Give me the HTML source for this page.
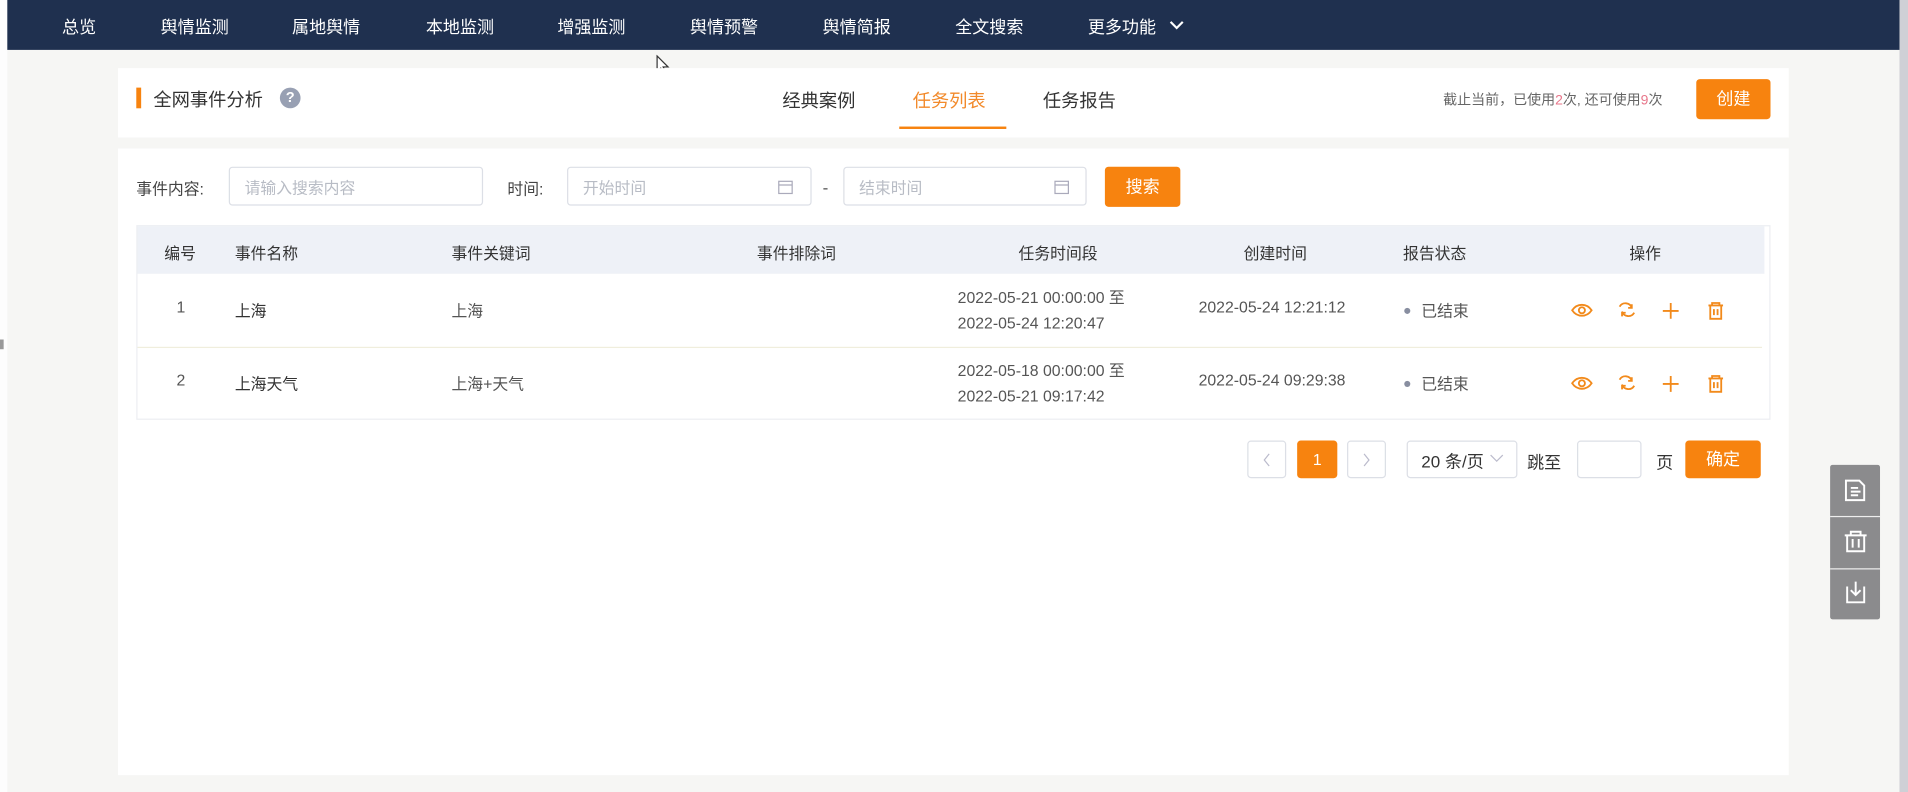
<!DOCTYPE html>
<html><head><meta charset="utf-8"><style>
html,body{margin:0;padding:0;width:1908px;height:792px;overflow:hidden;background:#f6f6f4;}
#w{position:absolute;left:0;top:0;width:1568px;height:651px;transform:scale(1.21684);transform-origin:0 0;font-family:"Liberation Sans","Noto Sans CJK SC",sans-serif;color:#333;font-size:14px;}
.a{position:absolute;white-space:nowrap;}
.nav{left:6px;top:0;width:1555px;height:41px;background:#1f304f;}
.nav span{position:absolute;top:12px;color:#fff;font-size:14px;}
.card{background:#fff;}
.inp{border:1px solid #dcdfe6;border-radius:3px;background:#fff;height:32px;box-sizing:border-box;color:#b8bcc5;font-size:13px;line-height:33px;padding-left:12px;}
.btn{background:#f7830f;color:#fff;border-radius:3px;text-align:center;}
.th{top:198px;font-size:13px;color:#333;}
.td{font-size:13px;color:#555;}
.ic{position:absolute;}
</style></head><body><div id="w">
<div class="a" style="left:0;top:0;width:6px;height:651px;background:#fdfdfd"></div>
<div class="a" style="left:1561px;top:0;width:7px;height:651px;background:#cfd0d6"></div>
<div class="a nav">
<span style="left:45px">总览</span><span style="left:126px">舆情监测</span><span style="left:234px">属地舆情</span><span style="left:344px">本地监测</span><span style="left:452px">增强监测</span><span style="left:561px">舆情预警</span><span style="left:670px">舆情简报</span><span style="left:779px">全文搜索</span><span style="left:888px">更多功能</span>
<svg class="ic" style="left:955px;top:16px" width="12" height="10"><path d="M1 2l5 5 5-5" stroke="#fff" stroke-width="1.8" fill="none"/></svg>
</div>
<svg class="ic" style="left:539px;top:45px" width="12" height="18"><path d="M1 1v13l3-3 3 6 2-1-3-6h4z" fill="#fff" stroke="#333" stroke-width="1"/></svg>

<div class="a card" style="left:97px;top:56px;width:1373px;height:57px"></div>
<div class="a" style="left:112px;top:72px;width:4px;height:17px;background:#f7830f"></div>
<div class="a" style="left:126px;top:71px;font-size:15px;color:#333">全网事件分析</div>
<div class="a" style="left:230px;top:72px;width:17px;height:17px;border-radius:50%;background:#98a0b3;color:#fff;font-size:12px;font-weight:bold;text-align:center;line-height:17px">?</div>
<div class="a" style="left:643px;top:72px;font-size:15px;color:#333">经典案例</div>
<div class="a" style="left:750px;top:72px;font-size:15px;color:#f28a2b">任务列表</div>
<div class="a" style="left:739px;top:104px;width:88px;height:2px;background:#f7830f"></div>
<div class="a" style="left:857px;top:72px;font-size:15px;color:#333">任务报告</div>
<div class="a" style="left:1186px;top:74px;font-size:11.5px;color:#666">截止当前，已使用<span style="color:#e8768a">2</span>次, 还可使用<span style="color:#e8768a">9</span>次</div>
<div class="a btn" style="left:1394px;top:65px;width:61px;height:33px;line-height:33px;font-size:14px">创建</div>

<div class="a card" style="left:97px;top:122px;width:1373px;height:515px"></div>
<div class="a" style="left:112px;top:145px;font-size:13px;color:#444">事件内容:</div>
<div class="a inp" style="left:188px;top:137px;width:209px">请输入搜索内容</div>
<div class="a" style="left:417px;top:145px;font-size:13px;color:#444">时间:</div>
<div class="a inp" style="left:466px;top:137px;width:201px">开始时间</div>
<svg class="ic" style="left:639px;top:147px" width="13" height="13"><rect x="1" y="2" width="11" height="10" fill="none" stroke="#aab" stroke-width="1"/><path d="M1 5h11" stroke="#aab"/></svg>
<div class="a" style="left:676px;top:146px;color:#555">-</div>
<div class="a inp" style="left:693px;top:137px;width:200px">结束时间</div>
<svg class="ic" style="left:866px;top:147px" width="13" height="13"><rect x="1" y="2" width="11" height="10" fill="none" stroke="#aab" stroke-width="1"/><path d="M1 5h11" stroke="#aab"/></svg>
<div class="a btn" style="left:908px;top:137px;width:62px;height:33px;line-height:33px;font-size:14px">搜索</div>

<div class="a" style="left:112px;top:185px;width:1343px;height:160px;border:1px solid #eceef2;box-sizing:border-box"></div>
<div class="a" style="left:113px;top:186px;width:1337px;height:39px;background:#eef1f7"></div>
<div class="a th" style="left:135px">编号</div>
<div class="a th" style="left:193px">事件名称</div>
<div class="a th" style="left:371px">事件关键词</div>
<div class="a th" style="left:622px">事件排除词</div>
<div class="a th" style="left:837px">任务时间段</div>
<div class="a th" style="left:1022px">创建时间</div>
<div class="a th" style="left:1153px">报告状态</div>
<div class="a th" style="left:1339px">操作</div>
<div class="a" style="left:113px;top:285px;width:1335px;height:1px;background:#f0eedd"></div>

<div class="a td" style="left:145px;top:245px">1</div>
<div class="a td" style="left:193px;top:245px;color:#333">上海</div>
<div class="a td" style="left:371px;top:245px">上海</div>
<div class="a td" style="left:787px;top:234px;line-height:21px">2022-05-21 00:00:00 至<br>2022-05-24 12:20:47</div>
<div class="a td" style="left:985px;top:245px">2022-05-24 12:21:12</div>
<div class="a" style="left:1154px;top:253px;width:5px;height:5px;border-radius:50%;background:#888ea0"></div>
<div class="a td" style="left:1168px;top:245px">已结束</div>

<div class="a td" style="left:145px;top:305px">2</div>
<div class="a td" style="left:193px;top:305px;color:#333">上海天气</div>
<div class="a td" style="left:371px;top:305px">上海+天气</div>
<div class="a td" style="left:787px;top:294px;line-height:21px">2022-05-18 00:00:00 至<br>2022-05-21 09:17:42</div>
<div class="a td" style="left:985px;top:305px">2022-05-24 09:29:38</div>
<div class="a" style="left:1154px;top:313px;width:5px;height:5px;border-radius:50%;background:#888ea0"></div>
<div class="a td" style="left:1168px;top:305px">已结束</div>

<svg class="ic" style="left:1290px;top:246px" width="130" height="80">
<g id="r" fill="none" stroke="#f28a1b" stroke-width="1.5">
<path d="M2 9c4-6 12-6 16 0c-4 6-12 6-16 0z"/><circle cx="10" cy="9" r="2.5"/>
<path d="M41 6a5.5 5.5 0 0 1 10 1M53 11a5.5 5.5 0 0 1-10-1"/><path d="M51 4v3h-3M43 14v-3h3"/>
<path d="M83 3v13M76.5 9.5h13"/>
<path d="M114 5h12M117 5v-2h6v2M115.5 5v11h9V5M118.5 8v5M121.5 8v5"/>
</g>
<use href="#r" y="60"/>
</svg>

<div class="a" style="left:1025px;top:362px;width:32px;height:31px;border:1px solid #dcdfe6;border-radius:3px;box-sizing:border-box;background:#fff"></div>
<svg class="ic" style="left:1037px;top:372px" width="8" height="12"><path d="M6 1L2 6l4 5" stroke="#bbc" fill="none"/></svg>
<div class="a btn" style="left:1066px;top:362px;width:33px;height:31px;line-height:31px;font-size:13px">1</div>
<div class="a" style="left:1107px;top:362px;width:32px;height:31px;border:1px solid #dcdfe6;border-radius:3px;box-sizing:border-box;background:#fff"></div>
<svg class="ic" style="left:1119px;top:372px" width="8" height="12"><path d="M2 1l4 5-4 5" stroke="#bbc" fill="none"/></svg>
<div class="a" style="left:1156px;top:362px;width:91px;height:31px;border:1px solid #dcdfe6;border-radius:3px;box-sizing:border-box;background:#fff"></div>
<div class="a" style="left:1168px;top:369px;font-size:14px;color:#333">20 条/页</div>
<svg class="ic" style="left:1224px;top:372px" width="12" height="9"><path d="M1 2l5 5 5-5" stroke="#bbc" fill="none"/></svg>
<div class="a" style="left:1255px;top:370px;font-size:14px;color:#333">跳至</div>
<div class="a" style="left:1296px;top:362px;width:53px;height:31px;border:1px solid #dcdfe6;border-radius:3px;box-sizing:border-box;background:#fff"></div>
<div class="a" style="left:1361px;top:370px;font-size:14px;color:#333">页</div>
<div class="a btn" style="left:1385px;top:362px;width:62px;height:31px;line-height:31px;font-size:14px">确定</div>

<div class="a" style="left:1504px;top:382px;width:41px;height:127px;background:#8b8b8d;border-radius:2px"></div>
<div class="a" style="left:1504px;top:424px;width:41px;height:1px;background:#eee"></div>
<div class="a" style="left:1504px;top:467px;width:41px;height:1px;background:#eee"></div>
<svg class="ic" style="left:1504px;top:382px" width="41" height="127" fill="none" stroke="#fff" stroke-width="1.6">
<path d="M13 13h11l4 4v12H13z"/><path d="M17 19h6M17 22h8M17 25h6"/>
<path d="M12 58h18M17 58v-3h8v3M14 58v13h14V58M18.5 61v7M23.5 61v7"/>
<path d="M14 100v13h14v-13M21 96v11M17 103l4 4 4-4"/>
</svg>
<div class="a" style="left:0;top:279px;width:3px;height:8px;background:#999"></div>
</div></body></html>
